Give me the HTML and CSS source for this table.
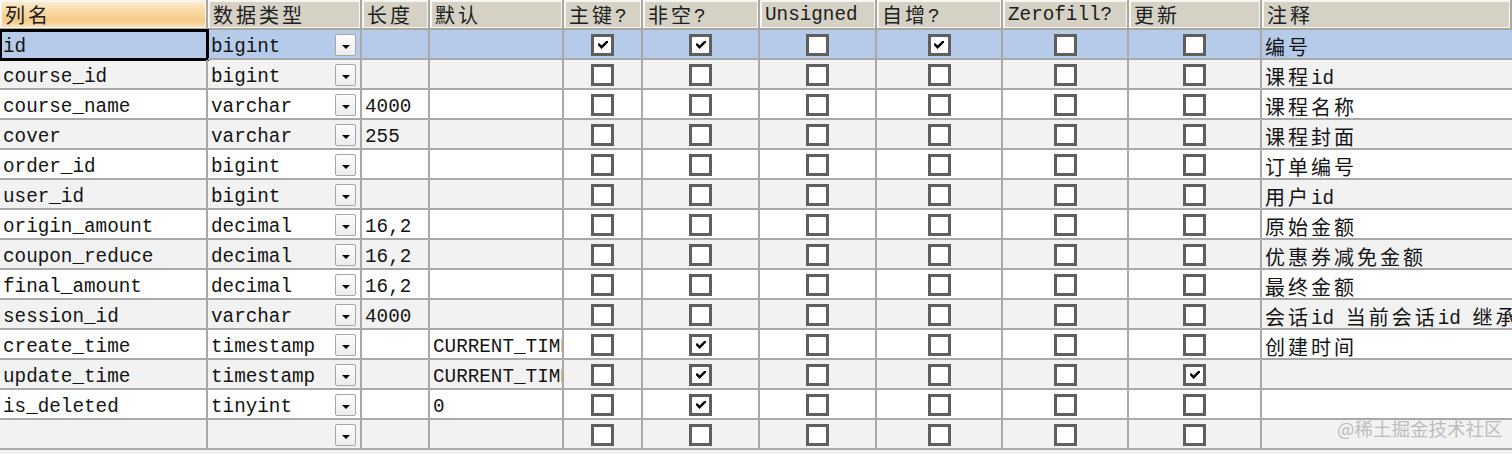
FILE: index.html
```html
<!DOCTYPE html>
<html lang="zh">
<head>
<meta charset="utf-8">
<title>表结构</title>
<link rel="stylesheet" href="styles.css">
</head>
<body>
<div class="grid">
  <div class="row head">
    <div class="c hc sorted"><span class="cjk">列名</span></div>
    <div class="c hc"><span class="cjk">数据类型</span></div>
    <div class="c hc"><span class="cjk">长度</span></div>
    <div class="c hc"><span class="cjk">默认</span></div>
    <div class="c hc"><span class="cjk">主键</span>?</div>
    <div class="c hc"><span class="cjk">非空</span>?</div>
    <div class="c hc">Unsigned</div>
    <div class="c hc"><span class="cjk">自增</span>?</div>
    <div class="c hc">Zerofill?</div>
    <div class="c hc"><span class="cjk">更新</span></div>
    <div class="c hc"><span class="cjk">注释</span></div>
  </div>

  <div class="row sel">
    <div class="c focus">id</div>
    <div class="c type"><span>bigint</span><span class="dd"></span></div>
    <div class="c"></div>
    <div class="c"></div>
    <div class="c cb"><span class="box"><svg viewBox="0 0 10 8" class="tick"><path d="M1 3.6 L3.6 6.2 L9 0.8"/></svg></span></div>
    <div class="c cb"><span class="box"><svg viewBox="0 0 10 8" class="tick"><path d="M1 3.6 L3.6 6.2 L9 0.8"/></svg></span></div>
    <div class="c cb"><span class="box"></span></div>
    <div class="c cb"><span class="box"><svg viewBox="0 0 10 8" class="tick"><path d="M1 3.6 L3.6 6.2 L9 0.8"/></svg></span></div>
    <div class="c cb"><span class="box"></span></div>
    <div class="c cb"><span class="box"></span></div>
    <div class="c"><span class="cjk">编号</span></div>
  </div>

  <div class="row alt">
    <div class="c">course_id</div>
    <div class="c type"><span>bigint</span><span class="dd"></span></div>
    <div class="c"></div>
    <div class="c"></div>
    <div class="c cb"><span class="box"></span></div>
    <div class="c cb"><span class="box"></span></div>
    <div class="c cb"><span class="box"></span></div>
    <div class="c cb"><span class="box"></span></div>
    <div class="c cb"><span class="box"></span></div>
    <div class="c cb"><span class="box"></span></div>
    <div class="c"><span class="cjk">课程</span>id</div>
  </div>

  <div class="row">
    <div class="c">course_name</div>
    <div class="c type"><span>varchar</span><span class="dd"></span></div>
    <div class="c">4000</div>
    <div class="c"></div>
    <div class="c cb"><span class="box"></span></div>
    <div class="c cb"><span class="box"></span></div>
    <div class="c cb"><span class="box"></span></div>
    <div class="c cb"><span class="box"></span></div>
    <div class="c cb"><span class="box"></span></div>
    <div class="c cb"><span class="box"></span></div>
    <div class="c"><span class="cjk">课程名称</span></div>
  </div>

  <div class="row alt">
    <div class="c">cover</div>
    <div class="c type"><span>varchar</span><span class="dd"></span></div>
    <div class="c">255</div>
    <div class="c"></div>
    <div class="c cb"><span class="box"></span></div>
    <div class="c cb"><span class="box"></span></div>
    <div class="c cb"><span class="box"></span></div>
    <div class="c cb"><span class="box"></span></div>
    <div class="c cb"><span class="box"></span></div>
    <div class="c cb"><span class="box"></span></div>
    <div class="c"><span class="cjk">课程封面</span></div>
  </div>

  <div class="row">
    <div class="c">order_id</div>
    <div class="c type"><span>bigint</span><span class="dd"></span></div>
    <div class="c"></div>
    <div class="c"></div>
    <div class="c cb"><span class="box"></span></div>
    <div class="c cb"><span class="box"></span></div>
    <div class="c cb"><span class="box"></span></div>
    <div class="c cb"><span class="box"></span></div>
    <div class="c cb"><span class="box"></span></div>
    <div class="c cb"><span class="box"></span></div>
    <div class="c"><span class="cjk">订单编号</span></div>
  </div>

  <div class="row alt">
    <div class="c">user_id</div>
    <div class="c type"><span>bigint</span><span class="dd"></span></div>
    <div class="c"></div>
    <div class="c"></div>
    <div class="c cb"><span class="box"></span></div>
    <div class="c cb"><span class="box"></span></div>
    <div class="c cb"><span class="box"></span></div>
    <div class="c cb"><span class="box"></span></div>
    <div class="c cb"><span class="box"></span></div>
    <div class="c cb"><span class="box"></span></div>
    <div class="c"><span class="cjk">用户</span>id</div>
  </div>

  <div class="row">
    <div class="c">origin_amount</div>
    <div class="c type"><span>decimal</span><span class="dd"></span></div>
    <div class="c">16,2</div>
    <div class="c"></div>
    <div class="c cb"><span class="box"></span></div>
    <div class="c cb"><span class="box"></span></div>
    <div class="c cb"><span class="box"></span></div>
    <div class="c cb"><span class="box"></span></div>
    <div class="c cb"><span class="box"></span></div>
    <div class="c cb"><span class="box"></span></div>
    <div class="c"><span class="cjk">原始金额</span></div>
  </div>

  <div class="row alt">
    <div class="c">coupon_reduce</div>
    <div class="c type"><span>decimal</span><span class="dd"></span></div>
    <div class="c">16,2</div>
    <div class="c"></div>
    <div class="c cb"><span class="box"></span></div>
    <div class="c cb"><span class="box"></span></div>
    <div class="c cb"><span class="box"></span></div>
    <div class="c cb"><span class="box"></span></div>
    <div class="c cb"><span class="box"></span></div>
    <div class="c cb"><span class="box"></span></div>
    <div class="c"><span class="cjk">优惠券减免金额</span></div>
  </div>

  <div class="row">
    <div class="c">final_amount</div>
    <div class="c type"><span>decimal</span><span class="dd"></span></div>
    <div class="c">16,2</div>
    <div class="c"></div>
    <div class="c cb"><span class="box"></span></div>
    <div class="c cb"><span class="box"></span></div>
    <div class="c cb"><span class="box"></span></div>
    <div class="c cb"><span class="box"></span></div>
    <div class="c cb"><span class="box"></span></div>
    <div class="c cb"><span class="box"></span></div>
    <div class="c"><span class="cjk">最终金额</span></div>
  </div>

  <div class="row alt">
    <div class="c">session_id</div>
    <div class="c type"><span>varchar</span><span class="dd"></span></div>
    <div class="c">4000</div>
    <div class="c"></div>
    <div class="c cb"><span class="box"></span></div>
    <div class="c cb"><span class="box"></span></div>
    <div class="c cb"><span class="box"></span></div>
    <div class="c cb"><span class="box"></span></div>
    <div class="c cb"><span class="box"></span></div>
    <div class="c cb"><span class="box"></span></div>
    <div class="c"><span class="cjk">会话</span>id <span class="cjk">当前会话</span>id <span class="cjk">继承会话</span></div>
  </div>

  <div class="row">
    <div class="c">create_time</div>
    <div class="c type"><span>timestamp</span><span class="dd"></span></div>
    <div class="c"></div>
    <div class="c">CURRENT_TIMESTAMP</div>
    <div class="c cb"><span class="box"></span></div>
    <div class="c cb"><span class="box"><svg viewBox="0 0 10 8" class="tick"><path d="M1 3.6 L3.6 6.2 L9 0.8"/></svg></span></div>
    <div class="c cb"><span class="box"></span></div>
    <div class="c cb"><span class="box"></span></div>
    <div class="c cb"><span class="box"></span></div>
    <div class="c cb"><span class="box"></span></div>
    <div class="c"><span class="cjk">创建时间</span></div>
  </div>

  <div class="row alt">
    <div class="c">update_time</div>
    <div class="c type"><span>timestamp</span><span class="dd"></span></div>
    <div class="c"></div>
    <div class="c">CURRENT_TIMESTAMP</div>
    <div class="c cb"><span class="box"></span></div>
    <div class="c cb"><span class="box"><svg viewBox="0 0 10 8" class="tick"><path d="M1 3.6 L3.6 6.2 L9 0.8"/></svg></span></div>
    <div class="c cb"><span class="box"></span></div>
    <div class="c cb"><span class="box"></span></div>
    <div class="c cb"><span class="box"></span></div>
    <div class="c cb"><span class="box"><svg viewBox="0 0 10 8" class="tick"><path d="M1 3.6 L3.6 6.2 L9 0.8"/></svg></span></div>
    <div class="c"></div>
  </div>

  <div class="row">
    <div class="c">is_deleted</div>
    <div class="c type"><span>tinyint</span><span class="dd"></span></div>
    <div class="c"></div>
    <div class="c">0</div>
    <div class="c cb"><span class="box"></span></div>
    <div class="c cb"><span class="box"><svg viewBox="0 0 10 8" class="tick"><path d="M1 3.6 L3.6 6.2 L9 0.8"/></svg></span></div>
    <div class="c cb"><span class="box"></span></div>
    <div class="c cb"><span class="box"></span></div>
    <div class="c cb"><span class="box"></span></div>
    <div class="c cb"><span class="box"></span></div>
    <div class="c"></div>
  </div>

  <div class="row alt">
    <div class="c"></div>
    <div class="c type"><span class="dd"></span></div>
    <div class="c"></div>
    <div class="c"></div>
    <div class="c cb"><span class="box"></span></div>
    <div class="c cb"><span class="box"></span></div>
    <div class="c cb"><span class="box"></span></div>
    <div class="c cb"><span class="box"></span></div>
    <div class="c cb"><span class="box"></span></div>
    <div class="c cb"><span class="box"></span></div>
    <div class="c"></div>
  </div>

  <div class="watermark">@稀土掘金技术社区</div>
</div>
</body>
</html>
```

FILE: styles.css
```css
html, body {
  margin: 0;
  padding: 0;
}
body {
  width: 1512px;
  height: 454px;
  overflow: hidden;
  background: #f0f0f0;
  font-family: "Liberation Mono", "Noto Sans CJK SC", monospace;
  font-size: 19.3px;
  color: #141414;
}
.grid {
  position: relative;
  width: 1512px;
}
.row {
  display: grid;
  grid-template-columns: 208px 154px 68px 134px 79px 117px 117px 126px 126px 133px 250px;
  height: 30px;
  background: #ffffff;
}
.row.alt {
  background: #f2f2f2;
}
.row.sel {
  background: #b6cbea;
}
.c {
  box-sizing: border-box;
  height: 30px;
  border-right: 2px solid #a9a9a9;
  border-bottom: 2px solid #a9a9a9;
  padding: 6px 0 0 3px;
  line-height: 22px;
  white-space: nowrap;
  overflow-x: clip;
  overflow-y: visible;
}
.c:last-child {
  border-right: none;
}
.cjk {
  font-family: "Noto Sans CJK SC", sans-serif;
  font-size: 20px;
  letter-spacing: 3px;
  vertical-align: -1px;
}
.head .c {
  background: #d5d2c5;
  box-shadow: inset 0 2px 0 #f7f6f1, inset 2px 0 0 #f7f6f1, inset -1px 0 0 #f7f6f1, inset 0 -1px 0 #f7f6f1;
  border-right: 2px solid #a8a79f;
  border-bottom: 2px solid #a8a79f;
  padding: 4px 0 0 5px;
  color: #202020;
}
.head .c.sorted {
  background: linear-gradient(to bottom, #fdefd6 0%, #fadcab 35%, #f6cb89 75%, #fce6c2 100%);
}
.focus {
  outline: 3px solid #000;
  outline-offset: -2px;
}
.type {
  display: flex;
  align-items: flex-start;
  padding-right: 4px;
}
.dd {
  box-sizing: border-box;
  width: 21px;
  height: 22px;
  margin-top: -2px;
  margin-left: auto;
  border: 1px solid #a6a6a6;
  border-radius: 2px;
  background: linear-gradient(to bottom, #fdfdfd, #ededed);
  display: flex;
  align-items: center;
  justify-content: center;
  flex-shrink: 0;
}
.dd::after {
  content: "";
  width: 0;
  height: 0;
  margin-top: 3px;
  border-left: 4px solid transparent;
  border-right: 4px solid transparent;
  border-top: 4px solid #000;
}
.cb {
  display: flex;
  align-items: center;
  justify-content: center;
  padding: 0;
}
.box {
  box-sizing: border-box;
  width: 23px;
  height: 22px;
  margin-top: 1px;
  border: 3px solid #5f5f5f;
  background: #ffffff;
  display: flex;
  align-items: center;
  justify-content: center;
}
.tick {
  width: 10px;
  height: 8px;
  fill: none;
  stroke: #000;
  stroke-width: 2.4;
  stroke-linecap: square;
}
.watermark {
  position: absolute;
  left: 1337px;
  top: 419px;
  white-space: nowrap;
  font-family: "Noto Sans CJK SC", sans-serif;
  font-size: 18.5px;
  color: #bdbdbd;
  line-height: 1;
}
```
